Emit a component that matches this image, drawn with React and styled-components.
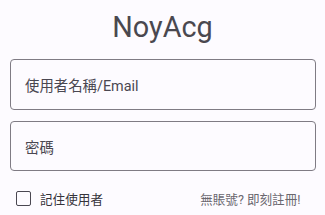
import React from "react";
import styled, { createGlobalStyle } from "styled-components";

const Global = createGlobalStyle`
  html, body { margin: 0; padding: 0; background: #fdfbff; }
  body { font-family: Roboto, "Noto Sans CJK TC", sans-serif; }
`;

const Page = styled.div`
  width: 325px;
  height: 215px;
  box-sizing: border-box;
  padding: 10px 9.5px 0 9.5px;
  display: flex;
  flex-direction: column;
  background: #fdfbff;
  overflow: hidden;
`;

const Title = styled.h1`
  margin: 0 0 15px 0;
  font-family: Roboto, "Noto Sans CJK TC", sans-serif;
  font-weight: 400;
  font-size: 28.8px;
  line-height: 34px;
  text-align: center;
  color: #4a484f;
`;

const Field = styled.div`
  box-sizing: border-box;
  height: ${(p) => p.$h || 51}px;
  margin-bottom: ${(p) => p.$mb || 0}px;
  border: 1px solid #7f7b84;
  border-radius: 4px;
  display: flex;
  align-items: center;
  padding: 0 14.5px;
  font-family: Roboto, "Noto Sans CJK TC", sans-serif;
  font-size: 14.4px;
  color: #4a4751;
`;

const Row = styled.div`
  display: flex;
  align-items: center;
  justify-content: space-between;
  padding: 0 15px 0 6.5px;
  margin-top: 19px;
  height: 16px;
`;

const CheckLabel = styled.label`
  display: flex;
  align-items: center;
  gap: 9px;
  font-size: 12.6px;
  color: #35333a;
  font-family: Roboto, "Noto Sans CJK TC", sans-serif;
`;

const Box = styled.span`
  box-sizing: border-box;
  width: 15px;
  height: 15px;
  border: 1.8px solid #4a4751;
  border-radius: 2px;
`;

const Link = styled.span`
  font-size: 12.6px;
  color: #6a676f;
  font-family: Roboto, "Noto Sans CJK TC", sans-serif;
`;

const Gap = styled.span`
  display: inline-block;
  width: 3px;
`;

export default function App() {
  return (
    <>
      <Global />
      <Page>
        <Title>NoyAcg</Title>
        <Field $mb={11}>使用者名稱/Email</Field>
        <Field $h={50}>密碼</Field>
        <Row>
          <CheckLabel>
            <Box />
            記住使用者
          </CheckLabel>
          <Link>
            無賬號?<Gap />即刻註冊!
          </Link>
        </Row>
      </Page>
    </>
  );
}
